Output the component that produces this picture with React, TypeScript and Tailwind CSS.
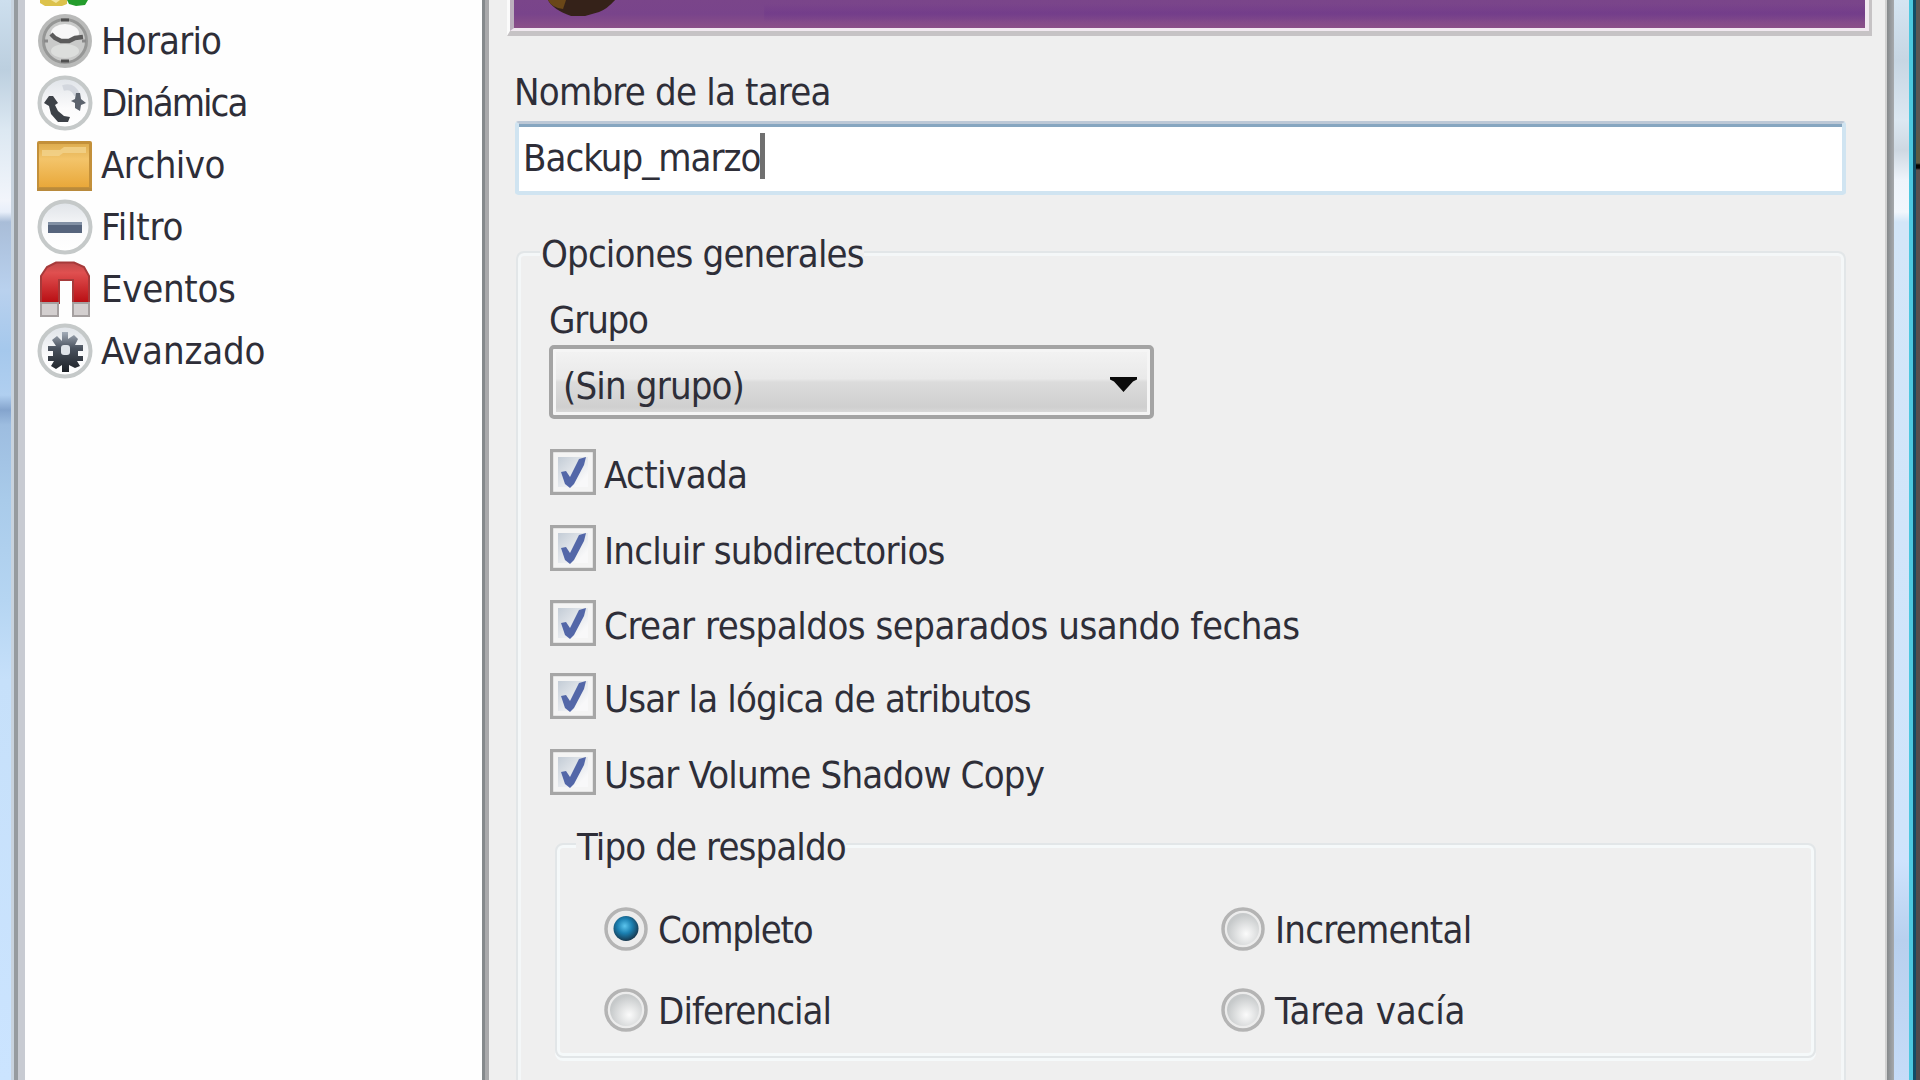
import React from "react";

const sidebarItems = [
  { name: "Horario", icon: <ClockIcon />, text: "tracking-[-0.85px]" },
  { name: "Dinámica", icon: <RefreshIcon />, text: "tracking-[-1.95px]" },
  { name: "Archivo", icon: <FolderIcon />, text: "tracking-[-0.55px]" },
  { name: "Filtro", icon: <MinusIcon />, text: "tracking-[-0.2px]" },
  { name: "Eventos", icon: <MagnetIcon />, text: "tracking-[-0.3px]" },
  { name: "Avanzado", icon: <GearIcon />, text: "tracking-[-0.15px]" },
];

const checks = [
  { name: "Activada", row: "mt-[31px]", text: "tracking-[-0.6px]" },
  { name: "Incluir subdirectorios", row: "mt-[26px]", text: "tracking-[-0.8px]" },
  { name: "Crear respaldos separados usando fechas", row: "mt-[25px]", text: "tracking-[-0.5px]" },
  { name: "Usar la lógica de atributos", row: "mt-[23px]", text: "tracking-[-0.83px]" },
  { name: "Usar Volume Shadow Copy", row: "mt-[26px]", text: "tracking-[-0.82px]" },
];

const radios = [
  { name: "Completo", on: true, text: "tracking-[-1.3px]" },
  { name: "Incremental", on: false, text: "tracking-[-0.75px]" },
  { name: "Diferencial", on: false, text: "tracking-[-0.95px]" },
  { name: "Tarea vacía", on: false, text: "tracking-[-0.15px]" },
];

function Disc() {
  return (
    <>
      <defs>
        <linearGradient id="disc" x1="0" y1="0" x2="0" y2="1">
          <stop offset="0" stopColor="#dfe3e8" />
          <stop offset="0.6" stopColor="#fbfbfc" />
          <stop offset="1" stopColor="#ffffff" />
        </linearGradient>
      </defs>
      <circle cx="28" cy="28" r="25.5" fill="url(#disc)" stroke="#c5c9c9" strokeWidth="4" />
    </>
  );
}

function ClockIcon() {
  return (
    <svg viewBox="0 0 56 56" className="size-14">
      <circle cx="28" cy="28" r="27" fill="#b9bab9" />
      <circle cx="28" cy="28" r="21.5" fill="#c9cac9" stroke="#969796" strokeWidth="3" />
      <ellipse cx="28" cy="20" rx="14" ry="9" fill="#f7f7f7" />
      <ellipse cx="28" cy="38" rx="14" ry="7" fill="#dcdedc" />
      <path d="M14 21 L18 25 L24 28 H32 L38 25 L46 24" fill="none" stroke="#5b5b5b" strokeWidth="4.5" />
      <path d="M24 7h8M24 48h8" stroke="#505050" strokeWidth="3" />
      <path d="M7 28h4M45 28h4" stroke="#8a8a8a" strokeWidth="3" />
    </svg>
  );
}

function RefreshIcon() {
  return (
    <svg viewBox="0 0 56 56" className="size-14">
      <Disc />
      <path d="M26 13 Q36 10 40 20" fill="none" stroke="#d3d7de" strokeWidth="6" />
      <path d="M34 26 L38 24 L39 18 L43 18 L44 24 L49 28 L44 30 L43 36 L38 33 L38 28 Z" fill="#5c636d" />
      <path d="M7 28 L12 21 L16 21 L21 28 L18 30 L21 36 L27 41 L33 42 L31 47 L21 47 L14 39 L12 31 Z" fill="#3d4248" />
    </svg>
  );
}

function FolderIcon() {
  return (
    <svg viewBox="0 0 56 52" className="mt-0.5 h-[52px] w-14">
      <defs>
        <linearGradient id="folder" x1="0" y1="0" x2="0" y2="1">
          <stop offset="0" stopColor="#dfae50" />
          <stop offset="0.35" stopColor="#f3c46a" />
          <stop offset="1" stopColor="#e9a83a" />
        </linearGradient>
      </defs>
      <rect x="0" y="1" width="55" height="50" rx="2" fill="#c3903a" />
      <rect x="2" y="4" width="50" height="43" fill="url(#folder)" />
      <path d="M5 10h18l4-3h22v6H26l-4 3H5z" fill="#f2d38c" opacity="0.8" />
      <path d="M0 49.5h55" stroke="#b98a3c" strokeWidth="3" />
    </svg>
  );
}

function MinusIcon() {
  return (
    <svg viewBox="0 0 56 56" className="size-14">
      <Disc />
      <rect x="11" y="23" width="34" height="11" fill="#56647c" />
      <rect x="11" y="23" width="34" height="3" fill="#8290a4" />
    </svg>
  );
}

function MagnetIcon() {
  return (
    <svg viewBox="0 0 56 56" className="size-14">
      <defs>
        <linearGradient id="magnet" x1="0" y1="0" x2="0" y2="1">
          <stop offset="0" stopColor="#c04a4a" />
          <stop offset="0.25" stopColor="#e05050" />
          <stop offset="1" stopColor="#b80d12" />
        </linearGradient>
      </defs>
      <path
        d="M4 42V15L10 6L19 1.5H37L47 6L52 15V42H36V19H22V42Z"
        fill="url(#magnet)"
        stroke="#a63a3a"
        strokeWidth="2"
      />
      <path d="M4 42h17v13H4zM36 42h16v13H36z" fill="#d3cfcf" stroke="#a5a0a0" strokeWidth="2" />
    </svg>
  );
}

function GearIcon() {
  return (
    <svg viewBox="0 0 56 56" className="size-14">
      <defs>
        <linearGradient id="gear" x1="0" y1="0" x2="0" y2="1">
          <stop offset="0" stopColor="#a3acb8" />
          <stop offset="0.4" stopColor="#4b535f" />
          <stop offset="1" stopColor="#1c2026" />
        </linearGradient>
      </defs>
      <Disc />
      <path
        d="M25 9h6v7l6-4 4 4-3 6h8v6h-5v5h5v5h-6l3 5-5 2-6-3v7h-7v-7l-6 4-5-3 3-5h-6v-5h5v-5h-5v-5h8l-4-6 5-4 5 5z"
        fill="url(#gear)"
      />
      <rect x="24" y="22" width="9" height="10" rx="3" fill="#dfe3e8" />
    </svg>
  );
}

function CheckBox() {
  return (
    <svg viewBox="0 0 46 46" className="mb-1.5 h-[46px] w-[46px] shrink-0">
      <defs>
        <linearGradient id="check" x1="0" y1="0" x2="1" y2="1">
          <stop offset="0" stopColor="#c3ccd6" />
          <stop offset="0.8" stopColor="#f8f8f9" />
        </linearGradient>
      </defs>
      <rect x="1.5" y="1.5" width="43" height="43" fill="#f4f4f4" stroke="#a6a6a6" strokeWidth="3.4" />
      <rect x="8" y="8" width="30" height="30" fill="url(#check)" />
      <path d="M11 23 L16 22 L20 28 L29 10 L36 8 L34 16 L24 35 L20 39 L15 35 Z" fill="#5367a8" />
    </svg>
  );
}

function Radio({ on }: { on: boolean }) {
  return (
    <svg viewBox="0 0 46 46" className="mb-[3px] size-[46px] shrink-0">
      <defs>
        <radialGradient id="radioOff" cx="0.6" cy="0.65" r="0.6">
          <stop offset="0" stopColor="#fbfbfb" />
          <stop offset="1" stopColor="#c6c9ca" />
        </radialGradient>
        <radialGradient id="radioOn" cx="0.45" cy="0.4" r="0.6">
          <stop offset="0" stopColor="#5cc5ee" />
          <stop offset="0.5" stopColor="#1b7fb0" />
          <stop offset="1" stopColor="#17384f" />
        </radialGradient>
      </defs>
      <circle cx="23" cy="23" r="20" fill="#ececec" stroke="#b4b4b4" strokeWidth="3.5" />
      {on ? (
        <circle cx="23" cy="22.5" r="12.5" fill="url(#radioOn)" />
      ) : (
        <circle cx="23" cy="23" r="16" fill="url(#radioOff)" />
      )}
    </svg>
  );
}

const App = () => {
  return (
    <div className="flex h-[1080px] w-[1920px] overflow-hidden bg-[#efefef] font-['DejaVu_Sans_Condensed','DejaVu_Sans',sans-serif] text-[38px] leading-10 font-stretch-condensed whitespace-nowrap text-[#2e2e38]">
      {/* left window frame */}
      <div className="w-[11px] shrink-0 bg-[linear-gradient(180deg,#cddfee_0px,#bccfdf_70px,#dce8f2_130px,#f2f5fb_200px,#e8effa_212px,#a9bdd8_222px,#b9d1ee_290px,#a5c8ec_350px,#b0cff0_395px,#84a4cd_410px,#9dbde0_425px,#a9cbea_500px,#b5d5f2_600px,#c6e0fa_680px,#cbe4ff_1080px)]"></div>
      <div className="w-[3px] shrink-0 bg-[#c8d3de]"></div>
      <div className="w-1 shrink-0 bg-[#969b9f]"></div>
      <div className="w-[7px] shrink-0 bg-[#c8cbd2]"></div>

      <div className="flex w-[457px] shrink-0 flex-col bg-[#fefefe] pl-3">
        <svg viewBox="0 0 56 10" className="h-2.5 w-14 shrink-0">
          <path d="M3 0h27v4l-5 2H8l-5-3z" fill="#dcc24c" />
          <path d="M14 0h9l-4 3z" fill="#f2e6a0" />
          <path d="M30 0h21l-3 5-9 1-7-2z" fill="#249c2c" />
        </svg>
        {sidebarItems.map((item) => (
          <div key={item.name} className="flex h-[62px] shrink-0 items-center gap-2">
            {item.icon}
            <span className={item.text}>{item.name}</span>
          </div>
        ))}
      </div>

      <div className="w-[3px] shrink-0 bg-[#85898c]"></div>
      <div className="w-1 shrink-0 bg-[#a9a9ab]"></div>

      <div className="flex w-[1396px] shrink-0 flex-col pl-[18px]">
        {/* banner, only its lower edge is in view */}
        <div className="flex h-9 w-[1365px] shrink-0 flex-col border-r-[3px] border-b-[5px] border-l-[3px] border-[#c6c3c5] border-l-[#fbfbfb]">
          <div className="flex h-[31px] border-r-[4px] border-b-[3px] border-l-[4px] border-[#f1e9f0] border-l-[#bcb0be]">
            <div className="h-7 flex-1 bg-[linear-gradient(180deg,#7a458a_0%,#79448b_50%,#8b5088_100%)]">
              <svg viewBox="0 0 1350 28" className="h-7 w-full" preserveAspectRatio="none">
                <defs>
                  <linearGradient id="haze" x1="0" y1="0" x2="0" y2="1">
                    <stop offset="0" stopColor="#70398a" stopOpacity="0" />
                    <stop offset="0.5" stopColor="#70398a" stopOpacity="0.6" />
                    <stop offset="1" stopColor="#70398a" stopOpacity="0" />
                  </linearGradient>
                </defs>
                <rect x="250" y="4" width="1100" height="18" fill="url(#haze)" />
                <path d="M34 0h67q-8 9-16 12l-14 4H57Q38 9 34 0" fill="#352219" />
                <path d="M34 0h18l-3 9Q38 8 34 0" fill="#6a4718" />
              </svg>
            </div>
          </div>
        </div>

        <div className="mt-9 pl-[7px] tracking-[-0.8px]">Nombre de la tarea</div>
        <div className="mt-[9px] ml-2 flex h-[74px] w-[1331px] shrink-0 items-center rounded-[4px] border-4 border-t-[3px] border-[#d0e4f1] border-t-[#bcc8d6] bg-white pl-1 shadow-[inset_0_3px_0_#86a6c0]">
          <span className="tracking-[-1px]">Backup_marzo</span>
          <span className="mb-1 h-[46px] w-[5px] bg-[#707070]"></span>
        </div>

        <fieldset className="mt-[39px] ml-[9px] h-[900px] w-[1330px] shrink-0 rounded-[8px] border-2 border-[#e2e6e8] pl-[31px] shadow-[inset_0_0_0_3px_#f4f7f8]">
          <legend className="-ml-[9px] h-9 bg-[#efefef] pl-[1px] tracking-[-0.85px]">
            Opciones generales
          </legend>
          <div className="mt-[30px] tracking-[-1.2px]">Grupo</div>
          <div className="mt-[5px] flex h-[74px] w-[605px] items-center rounded-[5px] border-4 border-[#a4a4a4] bg-[linear-gradient(180deg,#f3f3f3_0%,#e9e9e9_45%,#dcdcdc_50%,#cfcfcf_88%,#dedede_100%)] pr-[13px] pl-2.5 shadow-[inset_0_0_0_3px_#f5f5f5]">
            <span className="flex-1 pt-[7px] tracking-[-0.85px]">(Sin grupo)</span>
            <svg viewBox="0 0 27 15" className="mt-1 h-[15px] w-[27px]">
              <path d="M0 0h27v2.5l-4 2L13.5 15 4 4.5l-4-2z" fill="#0a0a0a" />
            </svg>
          </div>

          {checks.map((item) => (
            <div key={item.name} className={`flex h-[50px] items-center gap-2 pl-px ${item.row}`}>
              <CheckBox />
              <span className={item.text}>{item.name}</span>
            </div>
          ))}

          <fieldset className="mt-[27px] ml-1.5 h-[231px] w-[1261px] rounded-[8px] border-2 border-[#e2e6e8] pl-[46px] shadow-[inset_0_0_0_3px_#f5f9fa,0_3px_0_#f5f9fa]">
            <legend className="-ml-[27px] h-[34px] bg-[#efefef] pl-[1px] tracking-[-0.9px]">
              Tipo de respaldo
            </legend>
            <div className="mt-11 grid grid-cols-[617px_1fr] gap-y-[31px]">
              {radios.map((item) => (
                <div key={item.name} className="flex h-[50px] items-center gap-[9px]">
                  <Radio on={item.on} />
                  <span className={item.text}>{item.name}</span>
                </div>
              ))}
            </div>
          </fieldset>
        </fieldset>
      </div>

      {/* right window frame */}
      <div className="w-0.5 shrink-0 bg-[#d2d2d2]"></div>
      <div className="w-[7px] shrink-0 bg-[linear-gradient(90deg,#85898b,#a6a9ad)]"></div>
      <div className="w-[15px] shrink-0 bg-[linear-gradient(180deg,#d5e5f2_0px,#c7d6e3_60px,#dce8f2_120px,#ced8e2_150px,#eef4fb_180px,#f2f7fd_212px,#d3e6f8_222px,#cfe4fb_840px,#cfe3fd_860px,#b8d0ee_940px,#c6dcf8_1080px)]"></div>
      <div className="w-1 shrink-0 bg-[#4cc8df]"></div>
      <div className="w-[3px] shrink-0 bg-[#114c66]"></div>
      <div className="w-1 shrink-0 bg-[linear-gradient(180deg,#5b5654_0px,#5b5654_125px,#5e5a42_150px,#5e5a42_163px,#080503_165px,#080503_168px,#5b504e_170px,#504a4c_1080px)]"></div>
    </div>
  );
};

export default App;
